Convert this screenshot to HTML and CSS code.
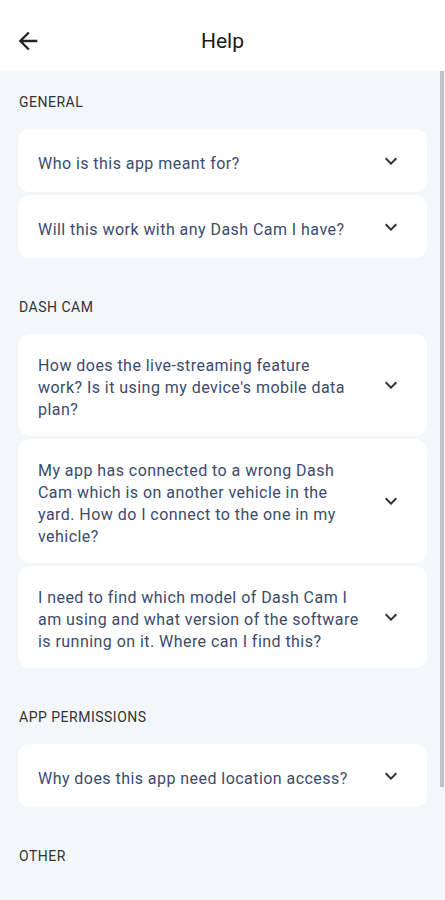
FILE: index.html
```html
<!DOCTYPE html>
<html lang="en">
<head>
    <meta charset="UTF-8">
    <meta name="viewport" content="width=device-width, initial-scale=1.0">
    <title>Help</title>
    <link rel="stylesheet" href="styles.css">
</head>
<body>
    <header class="topbar">
        <button class="back" aria-label="Back">
            <svg viewBox="0 0 24 24" width="28" height="28"><path d="M20 11H7.83l5.59-5.59L12 4l-8 8 8 8 1.41-1.41L7.83 13H20v-2z"/></svg>
        </button>
        <h1 class="title">Help</h1>
        <span></span>
    </header>

    <main class="content">
        <section class="group">
            <h2 class="group-title">General</h2>
            <div class="faq">
                <div class="question">Who is this app meant for?</div>
                <svg class="chevron" viewBox="0 0 24 24"><path d="M16.59 8.59L12 13.17 7.41 8.59 6 10l6 6 6-6z"/></svg>
            </div>
            <div class="faq">
                <div class="question">Will this work with any Dash Cam I have?</div>
                <svg class="chevron" viewBox="0 0 24 24"><path d="M16.59 8.59L12 13.17 7.41 8.59 6 10l6 6 6-6z"/></svg>
            </div>
        </section>

        <section class="group">
            <h2 class="group-title">Dash Cam</h2>
            <div class="faq">
                <div class="question">How does the live-streaming feature<br>work? Is it using my device's mobile data plan?</div>
                <svg class="chevron" viewBox="0 0 24 24"><path d="M16.59 8.59L12 13.17 7.41 8.59 6 10l6 6 6-6z"/></svg>
            </div>
            <div class="faq">
                <div class="question">My app has connected to a wrong Dash Cam which is on another vehicle in the yard. How do I connect to the one in my vehicle?</div>
                <svg class="chevron" viewBox="0 0 24 24"><path d="M16.59 8.59L12 13.17 7.41 8.59 6 10l6 6 6-6z"/></svg>
            </div>
            <div class="faq">
                <div class="question">I need to find which model of Dash Cam I am using and what version of the software is running on it. Where can I find this?</div>
                <svg class="chevron" viewBox="0 0 24 24"><path d="M16.59 8.59L12 13.17 7.41 8.59 6 10l6 6 6-6z"/></svg>
            </div>
        </section>

        <section class="group">
            <h2 class="group-title">App Permissions</h2>
            <div class="faq">
                <div class="question">Why does this app need location access?</div>
                <svg class="chevron" viewBox="0 0 24 24"><path d="M16.59 8.59L12 13.17 7.41 8.59 6 10l6 6 6-6z"/></svg>
            </div>
        </section>

        <section class="group">
            <h2 class="group-title">Other</h2>
        </section>

        <div class="scroll-thumb"></div>
    </main>
</body>
</html>
```

FILE: styles.css
```css
body {
    margin: 0;
    height: 900px;
    overflow: hidden;
    font-family: Roboto, "Noto Sans", sans-serif;
    background-color: #f4f7fa;
    color: #333;
}

.topbar {
    height: 71px;
    box-sizing: border-box;
    padding: 10px 14px 0;
    background-color: #fff;
    display: grid;
    grid-template-columns: 1fr auto 1fr;
    align-items: center;
}

.back {
    justify-self: start;
    width: 28px;
    height: 28px;
    padding: 0;
    border: 0;
    background: none;
    display: flex;
}

.back svg {
    fill: #222;
}

.title {
    margin: 0;
    font-size: 21px;
    font-weight: 400;
    color: #1b1b1b;
}

.content {
    position: relative;
    padding: 0 18px;
}

.group {
    padding: 23px 0 15px;
}

.group-title {
    margin: 0 0 19px 1px;
    font-size: 14px;
    line-height: 16px;
    font-weight: 400;
    letter-spacing: 0.5px;
    text-transform: uppercase;
    color: #333;
}

.faq {
    display: flex;
    align-items: center;
    gap: 12px;
    min-height: 63px;
    box-sizing: border-box;
    padding: 21px 24px 15px 20px;
    margin-bottom: 3px;
    background-color: #fff;
    border-radius: 12px;
}

.question {
    flex: 1;
    font-size: 16px;
    line-height: 22px;
    letter-spacing: 0.45px;
    color: #3b4b6d;
}

.chevron {
    width: 24px;
    height: 24px;
    margin-top: -6px;
    flex-shrink: 0;
    fill: #333;
}

.scroll-thumb {
    position: absolute;
    top: 0;
    right: 1px;
    width: 4px;
    height: 716px;
    background-color: #bfc1c3;
}
```
